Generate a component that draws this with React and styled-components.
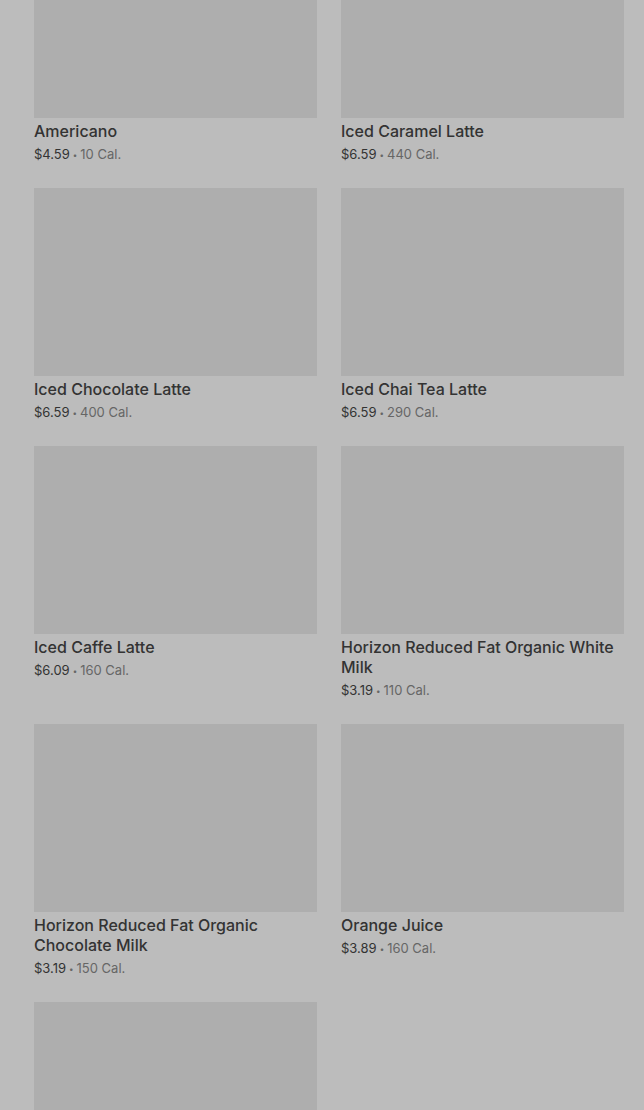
import React from "react";
import styled, { createGlobalStyle } from "styled-components";

const items = [
  { name: "Americano", price: "$4.59", cal: "10 Cal." },
  { name: "Iced Caramel Latte", price: "$6.59", cal: "440 Cal." },
  { name: "Iced Chocolate Latte", price: "$6.59", cal: "400 Cal." },
  { name: "Iced Chai Tea Latte", price: "$6.59", cal: "290 Cal." },
  { name: "Iced Caffe Latte", price: "$6.09", cal: "160 Cal." },
  { name: "Horizon Reduced Fat Organic White Milk", price: "$3.19", cal: "110 Cal." },
  { name: "Horizon Reduced Fat Organic Chocolate Milk", price: "$3.19", cal: "150 Cal." },
  { name: "Orange Juice", price: "$3.89", cal: "160 Cal." },
  { name: null },
];

const Global = createGlobalStyle`
  html, body {
    margin: 0;
    background: #bcbcbc;
    overflow: hidden;
  }
  body {
    font-family: Inter, "Noto Sans", sans-serif;
    color: #333;
  }
`;

const Page = styled.div`
  width: 644px;
  height: 1110px;
  overflow: hidden;
  background: #bcbcbc;
`;

const Grid = styled.div`
  display: grid;
  grid-template-columns: 283px 283px;
  column-gap: 24px;
  row-gap: 25px;
  padding: 0 20px 0 34px;
  margin-top: -70px;
`;

const Card = styled.div`
  display: flex;
  flex-direction: column;
`;

const Thumb = styled.div`
  height: 188px;
  background: #aeaeae;
`;

const Title = styled.div`
  margin-top: 3px;
  font-size: 16px;
  line-height: 20px;
  font-weight: 500;
  color: #333;
`;

const Meta = styled.div`
  margin-top: 3px;
  height: 19px;
  font-size: 13px;
  line-height: 20px;
  color: #666;
`;

const Price = styled.span`
  color: #333;
`;

const Dot = styled.span`
  margin: 0 3px;
  font-size: 8px;
  line-height: 1;
  vertical-align: 1px;
`;

export default function App() {
  return (
    <Page>
      <Global />
      <Grid>
        {items.map((it, i) => (
          <Card key={i}>
            <Thumb />
            {it.name && (
              <>
                <Title>{it.name}</Title>
                <Meta>
                  <Price>{it.price}</Price>
                  <Dot>•</Dot>
                  {it.cal}
                </Meta>
              </>
            )}
          </Card>
        ))}
      </Grid>
    </Page>
  );
}
